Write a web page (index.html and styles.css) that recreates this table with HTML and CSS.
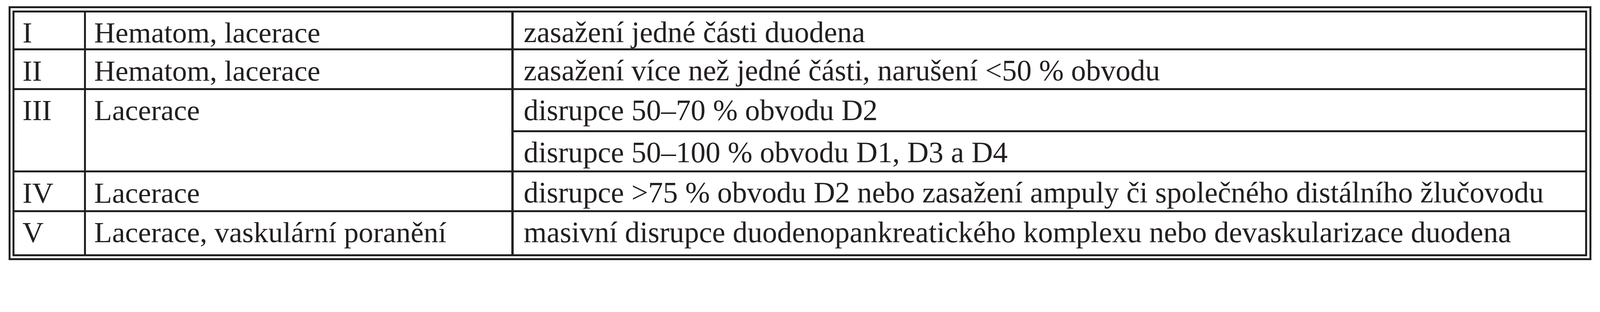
FILE: index.html
```html
<!DOCTYPE html>
<html lang="cs">
<head>
<meta charset="utf-8">
<title>Klasifikace poranění duodena</title>
<link rel="stylesheet" href="styles.css">
</head>
<body>
<div class="frame">
  <div class="grid">
    <div class="cell c1 r1">I</div>
    <div class="cell c2 r1">Hematom, lacerace</div>
    <div class="cell c3 r1">zasažení jedné části duodena</div>

    <div class="cell c1 r2">II</div>
    <div class="cell c2 r2">Hematom, lacerace</div>
    <div class="cell c3 r2">zasažení více než jedné části, narušení &lt;50 % obvodu</div>

    <div class="cell c1 span2">III</div>
    <div class="cell c2 span2">Lacerace</div>
    <div class="cell c3 r3">disrupce 50–70 % obvodu D2</div>
    <div class="cell c3 r4">disrupce 50–100 % obvodu D1, D3 a D4</div>

    <div class="cell c1 r5">IV</div>
    <div class="cell c2 r5">Lacerace</div>
    <div class="cell c3 r5">disrupce &gt;75 % obvodu D2 nebo zasažení ampuly či společného distálního žlučovodu</div>

    <div class="cell c1 r6">V</div>
    <div class="cell c2 r6">Lacerace, vaskulární poranění</div>
    <div class="cell c3 r6">masivní disrupce duodenopankreatického komplexu nebo devaskularizace duodena</div>
  </div>
</div>
</body>
</html>
```

FILE: styles.css
```css
/* 1rem = 10px of the 4750px-wide reference; scales with the viewport */
html {
  font-size: calc(100vw / 475);
  margin: 0;
  padding: 0;
  background: #ffffff;
}

body {
  margin: 0;
  padding: 1.9rem 0 0 2.5rem;
  font-family: "Liberation Serif", "Times New Roman", serif;
  color: #231f20;
  background: #ffffff;
}

.frame {
  width: 469.9rem;
  box-sizing: border-box;
  border: 0.6rem solid #231f20;
  padding: 0.6rem;
  background: #ffffff;
}

.grid {
  display: grid;
  grid-template-columns: 20.7rem 126.3rem 1fr;
  grid-template-rows: 10.7rem 11.2rem 12rem 11.3rem 11.2rem 12.5rem;
  gap: 0.6rem;
  border: 0.6rem solid #231f20;
  background: #231f20;
}

.cell {
  background: #ffffff;
  font-size: 8.7rem;
  line-height: 1;
  padding-top: 1.7rem;
  white-space: nowrap;
  min-width: 0;
  box-sizing: border-box;
}

.c1 { grid-column: 1; padding-left: 2.4rem; }
.c2 { grid-column: 2; padding-left: 2.4rem; }
.c3 { grid-column: 3; padding-left: 3rem; font-size: 8.8rem; padding-top: 1.6rem; }

.r1 { grid-row: 1; }
.r2 { grid-row: 2; }
.r3 { grid-row: 3; }
.r4 { grid-row: 4; }
.r5 { grid-row: 5; }
.r6 { grid-row: 6; }
.span2 { grid-row: 3 / span 2; }
```
